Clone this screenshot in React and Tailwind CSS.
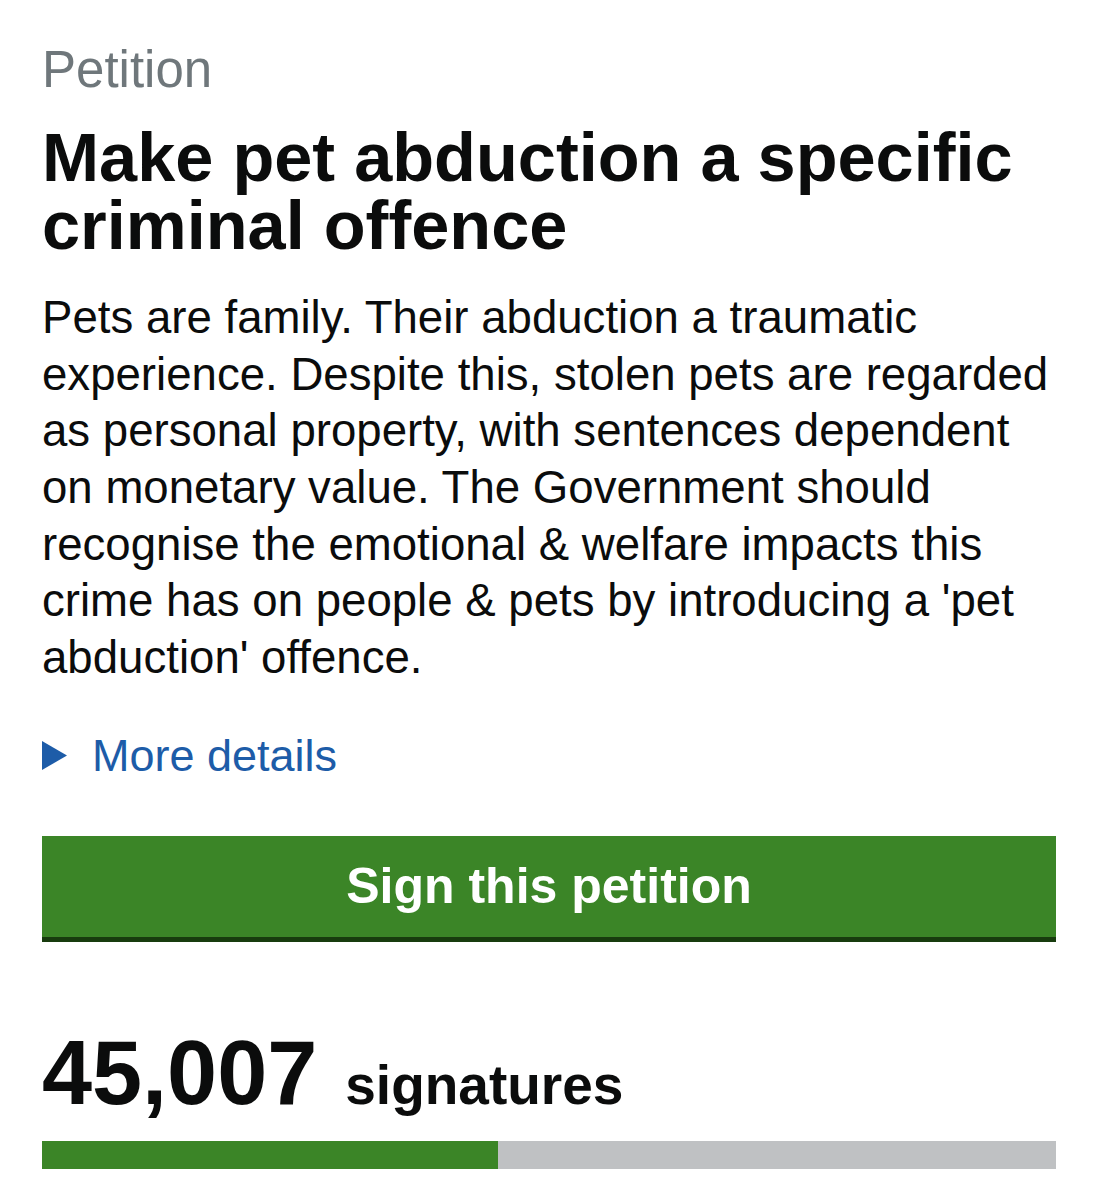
import React from 'react';

const signatures = 45007;
const target = 100000;

const App = () => {
  const pct = Math.min(100, (signatures / target) * 100);

  return (
    <div className="min-h-[1200px] bg-white pl-[42px] pr-[43px] pt-[40px] text-[#0b0c0c] font-['Liberation_Sans',Arial,sans-serif]">
      {/* Heading */}
      <div className="text-[51px] leading-[60px] text-[#6f777b]">Petition</div>
      <h1 className="mt-[24px] text-[68.5px] leading-[68px] font-bold">
        Make pet abduction a specific criminal offence
      </h1>

      {/* Summary */}
      <p className="mt-[30px] text-[45.6px] leading-[56.67px]">
        Pets are family. Their abduction a traumatic experience. Despite this, stolen pets are regarded as
        personal property, with sentences dependent on monetary value. The Government should recognise the
        emotional &amp; welfare impacts this crime has on people &amp; pets by introducing a 'pet abduction'
        offence.
      </p>

      {/* More details */}
      <div className="mt-[41px] flex items-center h-[56px] text-[#1d5ca8]">
        <svg width="25" height="29" viewBox="0 0 25 29" className="shrink-0">
          <polygon points="0,0 25,14.5 0,29" fill="#1d5ca8" />
        </svg>
        <span className="ml-[25px] text-[45px] leading-[56px]">More details</span>
      </div>

      {/* Sign button */}
      <button className="mt-[52px] w-full h-[106px] flex items-center justify-center bg-[#3b8527] border-b-[5px] border-[#183c0e] text-white text-[50px] font-bold leading-none">
        Sign this petition
      </button>

      {/* Count */}
      <div className="mt-[81px] flex items-baseline h-[100px]">
        <span className="text-[90px] leading-[100px] font-bold">{signatures.toLocaleString('en-GB')}</span>
        <span className="ml-[28px] text-[55px] font-bold">signatures</span>
      </div>

      <div className="mt-[18px] h-[28px] bg-[#bfc1c3] flex">
        <div className="h-full bg-[#3b8527]" style={{ width: `${pct}%` }} />
      </div>
    </div>
  );
};

export default App;
